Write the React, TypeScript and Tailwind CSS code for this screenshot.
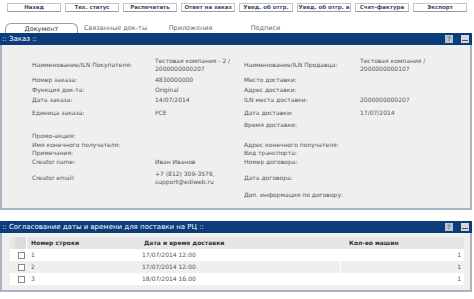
import React from 'react'

// Toolbar buttons across the top of the order page
const BUTTONS = [
  'Назад',
  'Тех. статус',
  'Распечатать',
  'Ответ на заказ',
  'Увед. об отгр.',
  'Увед. об отгр. а',
  'Счет-фактура',
  'Экспорт',
]

const TABS = ['Документ', 'Связанные док-ты', 'Приложения', 'Подписи']

type Row = {
  cls: string
  l?: string
  lv?: string[]
  r?: string
  rv?: string[]
}

// Order fields, two columns per row (cls = top gap + row height)
const ROWS: Row[] = [
  {
    cls: 'h-[16px]',
    l: 'Наименование/ILN Покупателя:',
    lv: ['Тестовая компания - 2 /', '2000000000207'],
    r: 'Наименование/ILN Продавца:',
    rv: ['Тестовая компания /', '2000000000107'],
  },
  { cls: 'mt-[3px] h-[8px]', l: 'Номер заказа:', lv: ['4830000000'], r: 'Место доставки:' },
  { cls: 'mt-[2px] h-[8px]', l: 'Функция док-та:', lv: ['Original'], r: 'Адрес доставки:' },
  { cls: 'mt-[2px] h-[8px]', l: 'Дата заказа:', lv: ['14/07/2014'], r: 'ILN места доставки:', rv: ['2000000000207'] },
  { cls: 'mt-[5px] h-[8px]', l: 'Единица заказа:', lv: ['PCE'], r: 'Дата доставки:', rv: ['17/07/2014'] },
  { cls: 'mt-[4px] h-[8px]', r: 'Время доставки:' },
  { cls: 'mt-[3px] h-[8px]', l: 'Промо-акция:' },
  { cls: 'mt-[1px] h-[8px]', l: 'Имя конечного получателя:', r: 'Адрес конечного получателя:' },
  { cls: 'h-[8px]', l: 'Примечания:', r: 'Вид транспорта:' },
  { cls: 'mt-[1px] h-[8px]', l: 'Creator name:', lv: ['Иван Иванов'], r: 'Номер договора:' },
  {
    cls: 'mt-[4px] h-[16px]',
    l: 'Creator email:',
    lv: ['+7 (812) 309-3579,', 'support@ediweb.ru'],
    r: 'Дата договора:',
  },
  { cls: 'mt-[5px] h-[8px]', r: 'Доп. информация по договору:' },
]

const DELIVERY = [
  { n: '1', d: '17/07/2014 12:00', c: '1' },
  { n: '2', d: '17/07/2014 12:00', c: '1' },
  { n: '3', d: '18/07/2014 16:00', c: '1' },
]

function PanelHeader({ title }: { title: string }) {
  return (
    <div className="flex h-[12px] items-center justify-between bg-[#0b3d7b] pl-[2px] pr-[3px]">
      <span className="text-[7px] leading-none text-white">{title}</span>
      <div className="flex items-center gap-[8px]">
        <span className="flex h-[8px] w-[8px] items-center justify-center bg-[#b9c3cf] text-[6px] font-bold leading-none text-[#6b7b91]">
          ?
        </span>
        <span className="flex h-[8px] w-[8px] items-end justify-center bg-[#d4d8de] pb-[2px]">
          <span className="h-[1px] w-[6px] bg-[#556]" />
        </span>
      </div>
    </div>
  )
}

function Values({ lines }: { lines?: string[] }) {
  if (!lines) return null
  return (
    <div className="flex flex-col">
      {lines.map((t) => (
        <span key={t}>{t}</span>
      ))}
    </div>
  )
}

export default function App() {
  return (
    <div
      className="h-[299px] w-[474px] overflow-hidden bg-white text-[6px] leading-[8px] text-[#555]"
      style={{ fontFamily: '"DejaVu Sans", Verdana, sans-serif' }}
    >
      {/* Toolbar */}
      <div className="flex gap-[4px] pl-[7px] pt-[3px]">
        {BUTTONS.map((b) => (
          <div
            key={b}
            className="flex h-[9px] w-[54px] items-center justify-center border border-[#c4c4c4] border-b-[#9a9a9a] bg-white text-[5.5px] font-bold leading-none text-[#3d4d68]"
          >
            {b}
          </div>
        ))}
      </div>

      {/* Tabs */}
      <div className="mt-[11px] flex pl-[5px]">
        {TABS.map((t, i) => (
          <div
            key={t}
            className={
              i === 0
                ? 'flex h-[10px] w-[73px] items-center justify-center rounded-t-[6px] border border-b-0 border-[#9a9a9a] bg-white text-[6.5px] text-[#333]'
                : 'flex h-[10px] w-[75px] items-center justify-center text-[6.5px] text-[#666]'
            }
          >
            {t}
          </div>
        ))}
      </div>

      {/* Order panel */}
      <div className="w-[472px]">
        <PanelHeader title=":: Заказ ::" />
        <div className="h-[165px] border-x-2 border-b-2 border-[#a9b4c2] bg-[#efefef] pt-[12px]">
          {ROWS.map((r, i) => (
            <div key={i} className={`flex items-center pl-[30px] ${r.cls}`}>
              <div className="w-[123px]">{r.l}</div>
              <div className="w-[89px]">
                <Values lines={r.lv} />
              </div>
              <div className="w-[116px]">{r.r}</div>
              <div>
                <Values lines={r.rv} />
              </div>
            </div>
          ))}
        </div>
      </div>

      {/* Delivery agreement panel */}
      <div className="mt-[11px] w-[472px]">
        <PanelHeader title=":: Согласование даты и времени для поставки на РЦ ::" />
        <div className="border-x-2 border-b-2 border-[#a9b4c2] bg-[#efefef] pb-[5px] pl-[8px] pr-[6px] pt-[4px]">
          <div className="bg-white">
            <div className="flex h-[12px] items-center bg-[#e6e6e6] font-bold text-[#333]">
              <div className="ml-[5px] h-full w-[12px] border-r border-white bg-[#dcdcdc]" />
              <div className="w-[117px] pl-[4px]">Номер строки</div>
              <div className="w-[198px]">Дата и время доставки</div>
              <div className="pl-[7px]">Кол-во машин</div>
            </div>
            {DELIVERY.map((row, i) => (
              <div
                key={row.n}
                className={`flex h-[12px] items-center ${i === 1 ? 'bg-[#efefef]' : 'bg-white'}`}
              >
                <div className="ml-[8px] h-[7px] w-[7px] border border-[#888] bg-white" />
                <div className="w-[117px] pl-[6px]">{row.n}</div>
                <div className="w-[198px]">{row.d}</div>
                <div className="h-full flex-1 border-l border-white pr-[3px] text-right leading-[12px]">
                  {row.c}
                </div>
              </div>
            ))}
          </div>
        </div>
      </div>
    </div>
  )
}
